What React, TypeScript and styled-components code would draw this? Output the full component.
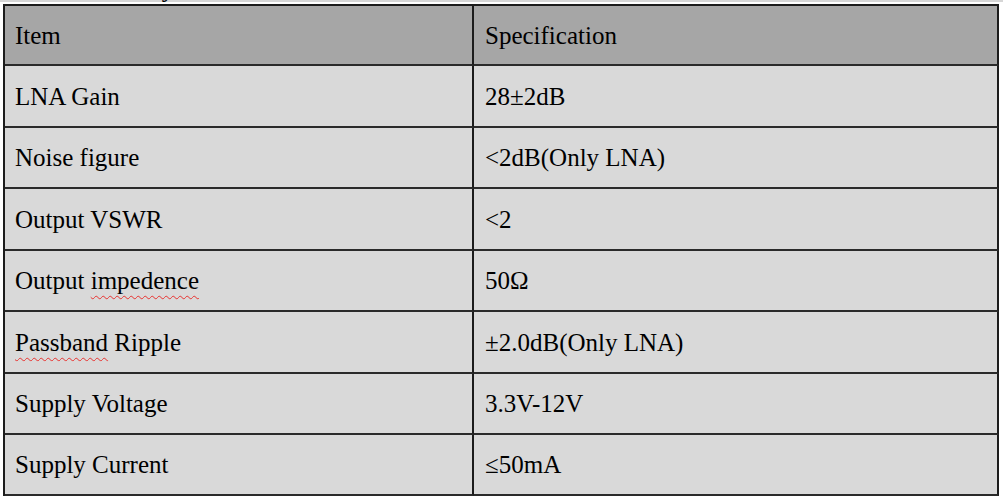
import React from "react";
import styled, { createGlobalStyle } from "styled-components";

const rows: { item: string; spec: string; misspelt?: [string, string] }[] = [
  { item: "LNA Gain", spec: "28±2dB" },
  { item: "Noise figure", spec: "<2dB(Only LNA)" },
  { item: "Output VSWR", spec: "<2" },
  { item: "Output impedence", spec: "50Ω", misspelt: ["Output ", "impedence"] },
  { item: "Passband Ripple", spec: "±2.0dB(Only LNA)", misspelt: ["", "Passband"] },
  { item: "Supply Voltage", spec: "3.3V-12V" },
  { item: "Supply Current", spec: "≤50mA" },
];

const App = () => {
  return (
    <Page>
      <GlobalStyle />
      <TopStrip>
        <Caption>Summary</Caption>
      </TopStrip>
      <Table>
        <Cell $head>Item</Cell>
        <Cell $head>Specification</Cell>
        {rows.map((r) => (
          <React.Fragment key={r.item}>
            <Cell>
              {r.misspelt ? (
                <>
                  {r.misspelt[0]}
                  <Squiggle>{r.misspelt[1]}</Squiggle>
                  {r.item.slice(r.misspelt[0].length + r.misspelt[1].length)}
                </>
              ) : (
                r.item
              )}
            </Cell>
            <Cell>{r.spec}</Cell>
          </React.Fragment>
        ))}
      </Table>
    </Page>
  );
};

export default App;

const GlobalStyle = createGlobalStyle`
  body {
    margin: 0;
    background: #fff;
  }
`;

const Page = styled.div`
  width: 1003px;
  height: 500px;
  overflow: hidden;
  font-family: "Liberation Serif", "Times New Roman", serif;
  color: #000;
`;

const TopStrip = styled.div`
  height: 4px;
  overflow: hidden;
  background: linear-gradient(#d6d6d6 0 2px, #fff 2px);
`;

const Caption = styled.div`
  font-size: 25px;
  line-height: 29px;
  margin-top: -26px;
  padding-left: 77px;
`;

const Table = styled.div`
  display: grid;
  grid-template-columns: 469px 525px;
  grid-template-rows: 60px 62px 61px 62px 61px 62px 61px 61px;
  margin-left: 3px;
  width: 996px;
  border-top: 2px solid #1c1c1c;
  border-left: 2px solid #1c1c1c;
  box-sizing: border-box;
`;

const Cell = styled.div<{ $head?: boolean }>`
  display: flex;
  align-items: center;
  padding-left: 10px;
  font-size: 25px;
  line-height: 29px;
  background: ${(p) => (p.$head ? "#a6a6a6" : "#d9d9d9")};
  border-right: 2px solid #1c1c1c;
  border-bottom: 2px solid #2a2a2a;
  white-space: pre;
  &:nth-child(2n) {
    padding-left: 11px;
  }
`;

const Squiggle = styled.span`
  text-decoration: underline wavy #e8322f;
  text-decoration-thickness: 1px;
  text-underline-offset: 6px;
  text-decoration-skip-ink: none;
`;
